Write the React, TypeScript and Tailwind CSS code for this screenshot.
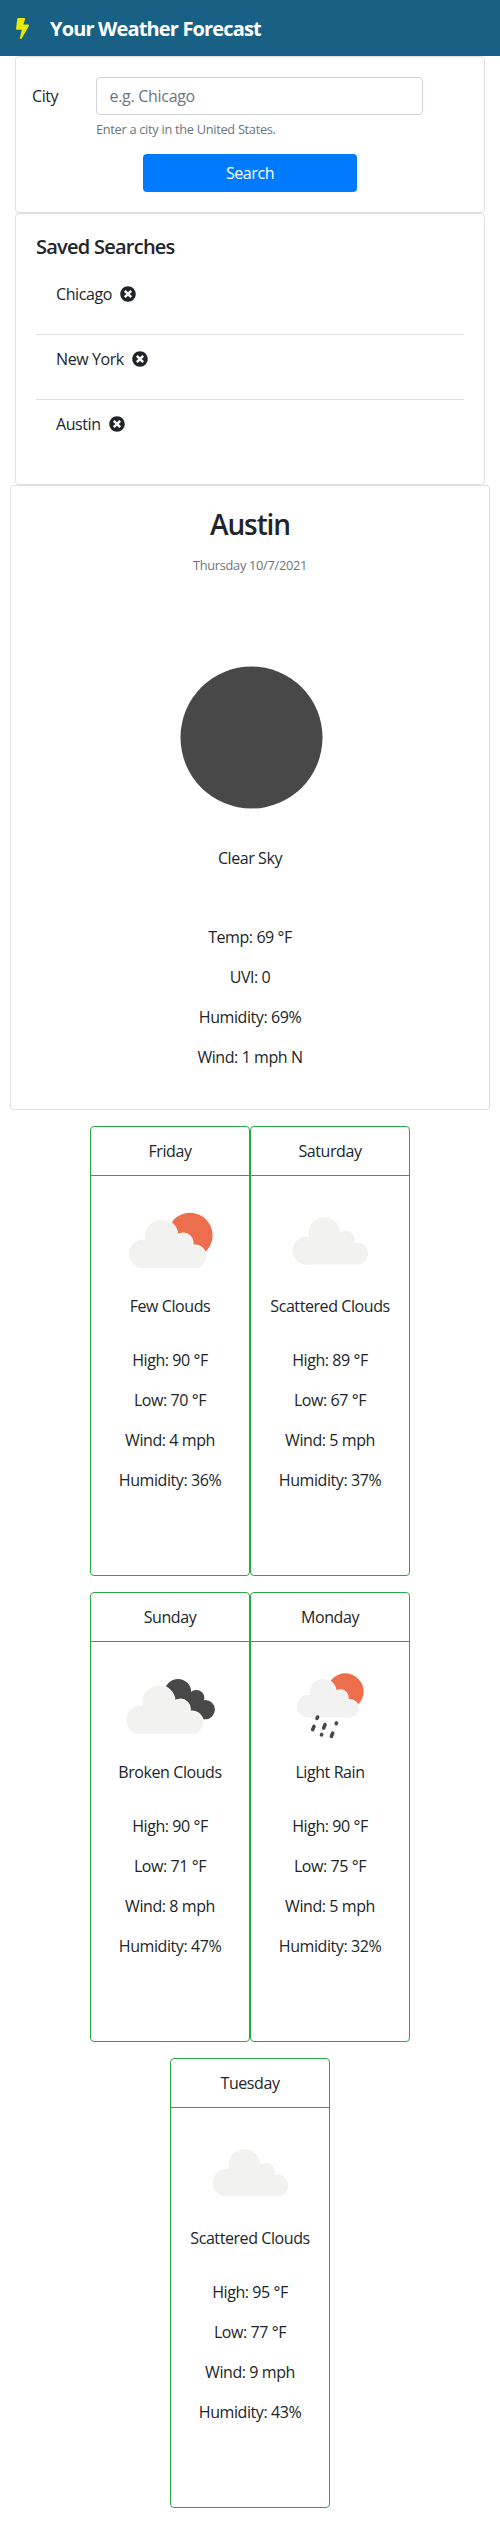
import React from "react";
import { FaTimesCircle } from "react-icons/fa";

type CloudProps = { fill?: string; halo?: boolean };

function Cloud({ fill = "#f2f2f0", halo = false }: CloudProps) {
  return (
    <g fill={fill} stroke={halo ? "#fff" : "none"} strokeWidth={halo ? 2 : 0}>
      <circle cx="23.3" cy="63.8" r="14.3" />
      <circle cx="41.3" cy="46" r="16.2" />
      <circle cx="63.3" cy="53" r="9.4" />
      <circle cx="74.7" cy="66.8" r="11.2" />
      <rect x="23.3" y="62" width="51.4" height="16" />
      <rect x="34" y="52" width="31" height="20" />
    </g>
  );
}

function FewClouds() {
  return (
    <>
      <circle cx="70" cy="45.4" r="22.6" fill="#ec6e4c" />
      <Cloud halo fill="#fff" />
      <Cloud />
    </>
  );
}

function ScatteredClouds() {
  return (
    <g transform="translate(3.9 -2) scale(0.98)">
      <Cloud />
    </g>
  );
}

function BrokenClouds() {
  return (
    <>
      <g fill="#484849">
        <circle cx="58" cy="36.2" r="13.2" />
        <circle cx="76.3" cy="42" r="8.1" />
        <circle cx="85.3" cy="53.6" r="9.6" />
        <path d="M58 36 L76 40 L85 63.2 L60 63.2 Z" />
      </g>
      <g transform="translate(-2.8 0)">
        <Cloud halo fill="#fff" />
        <Cloud />
      </g>
    </>
  );
}

function LightRain() {
  return (
    <>
      <circle cx="65.3" cy="35.6" r="18.3" fill="#ec6e4c" />
      <g transform="translate(9.8 -0.8) scale(0.8)">
        <Cloud halo fill="#fff" />
        <Cloud fill="#f2f2f2" />
      </g>
      <g stroke="#484849" strokeWidth="3.6" strokeLinecap="round">
        <path d="M37 62.4l.6-1.4M32.7 73.6l1.3-3.2M43.7 72l1.3-3.4M41.5 78.9l.2-.4M56.2 67.6l.3-.6M51.4 80.3l1.3-3.2" />
      </g>
    </>
  );
}

type Day = {
  name: string;
  sky: string;
  icon: React.ReactNode;
  high: number;
  low: number;
  wind: number;
  humidity: number;
};

const days: Day[] = [
  { name: "Friday", sky: "Few Clouds", icon: <FewClouds />, high: 90, low: 70, wind: 4, humidity: 36 },
  { name: "Saturday", sky: "Scattered Clouds", icon: <ScatteredClouds />, high: 89, low: 67, wind: 5, humidity: 37 },
  { name: "Sunday", sky: "Broken Clouds", icon: <BrokenClouds />, high: 90, low: 71, wind: 8, humidity: 47 },
  { name: "Monday", sky: "Light Rain", icon: <LightRain />, high: 90, low: 75, wind: 5, humidity: 32 },
  { name: "Tuesday", sky: "Scattered Clouds", icon: <ScatteredClouds />, high: 95, low: 77, wind: 9, humidity: 43 },
];

function DayCard({ day }: { day: Day }) {
  return (
    <article className="h-[450px] w-40 rounded border border-[#28a745] text-center">
      <h3 className="border-b border-[#28a745] py-3">{day.name}</h3>
      <svg className="mx-auto mt-3.5 mb-1 block size-[100px]" viewBox="0 0 100 100">
        {day.icon}
      </svg>
      <p className="-mx-2">{day.sky}</p>
      <div className="mt-[30px] flex flex-col gap-4">
        <p>High: {day.high} °F</p>
        <p>Low: {day.low} °F</p>
        <p>Wind: {day.wind} mph</p>
        <p>Humidity: {day.humidity}%</p>
      </div>
    </article>
  );
}

export default function App() {
  return (
    <div className="h-[2524px] bg-white font-['Open_Sans','Noto_Sans',sans-serif] text-base leading-6 tracking-[-0.42px] text-[#212529]">
      <header className="flex h-14 items-center bg-[#196184] pl-4">
        <svg className="h-[21px] w-[13px]" viewBox="0 0 320 512" preserveAspectRatio="none" fill="#e8e800">
          <path d="M296 160H180.600l42.600-129.800C227.200 15 215.700 0 200 0H56C44 0 33.800 8.900 32.200 20.800l-32 240C-1.700 275.200 9.500 288 24 288h118.700L96.600 482.500c-3.600 15.200 8 29.500 23.300 29.500 8.400 0 16.400-4.400 20.800-12l176-304c9.300-15.900-2.200-36-20.700-36z" />
        </svg>
        <h1 className="mt-0.5 ml-[21px] text-xl leading-[30px] font-bold tracking-[-0.85px] text-white">Your Weather Forecast</h1>
      </header>
      <section className="mx-[15px] h-[157px] rounded border border-[#dfdfdf] px-4 pt-5">
        <div className="flex">
          <label htmlFor="city" className="w-16 pt-[7px]">City</label>
          <div>
            <input
              id="city"
              placeholder="e.g. Chicago"
              className="block h-[38px] w-[327px] rounded border border-[#ced4da] px-[12.5px] tracking-[-0.3px] placeholder:text-[#6c757d]"
            />
            <p className="mt-1 text-[12.8px] leading-5 tracking-[-0.3px] text-[#6c757d]">Enter a city in the United States.</p>
          </div>
        </div>
        <button className="mx-auto mt-[15px] block h-[38px] w-[214px] rounded bg-[#007bff] text-white">Search</button>
      </section>
      <section className="mx-[15px] h-[272px] rounded border border-[#dfdfdf] px-5 pt-[21px]">
        <h2 className="mb-[11px] text-xl leading-6 font-semibold tracking-[-0.75px]">Saved Searches</h2>
        <ul className="divide-y divide-[#dfdfdf]">
          {["Chicago", "New York", "Austin"].map((city) => (
            <li key={city} className="flex h-[65px] gap-2 px-5 pt-3">
              {city}
              <FaTimesCircle className="mt-1 size-4" />
            </li>
          ))}
        </ul>
      </section>
      <section className="mx-2.5 h-[625px] rounded border border-[#dfdfdf] pt-[21px] text-center">
        <h2 className="text-[28px] leading-[34px] font-semibold tracking-[-1.1px]">Austin</h2>
        <p className="mt-3.5 text-[12.8px] leading-5 tracking-[-0.3px] text-[#6c757d]">Thursday 10/7/2021</p>
        <svg className="mx-auto mt-[63px] block size-[200px]" viewBox="0 0 200 200">
          <circle cx="101.5" cy="99.500" r="71" fill="#484849" />
        </svg>
        <p className="mt-2">Clear Sky</p>
        <div className="mt-[55px] flex flex-col gap-4">
          <p>Temp: 69 °F</p>
          <p>UVI: 0</p>
          <p>Humidity: 69%</p>
          <p>Wind: 1 mph N</p>
        </div>
      </section>
      <section className="mx-auto mt-4 flex w-[320px] flex-wrap justify-center gap-y-4">
        {days.map((day) => (
          <DayCard key={day.name} day={day} />
        ))}
      </section>
    </div>
  );
}
